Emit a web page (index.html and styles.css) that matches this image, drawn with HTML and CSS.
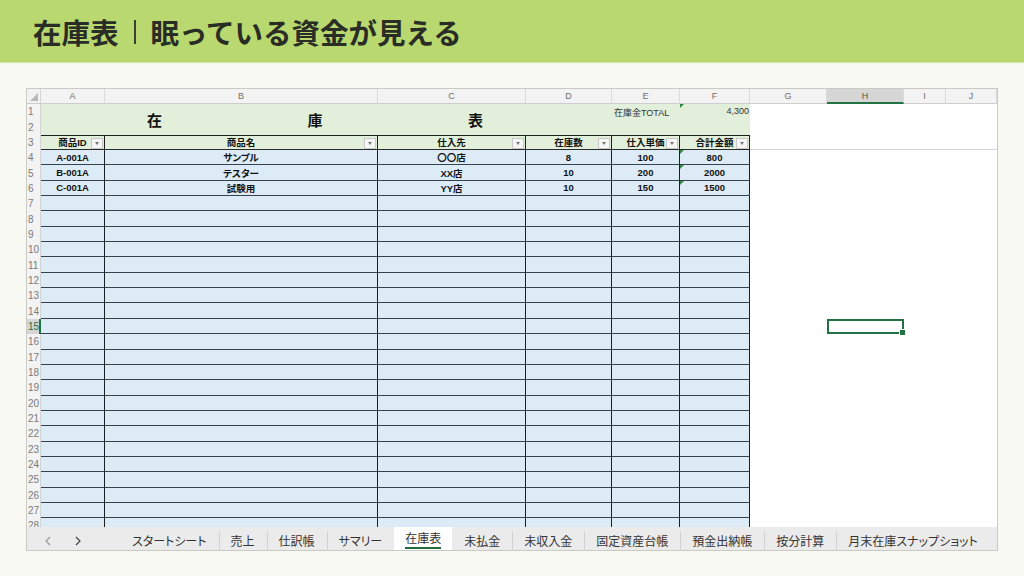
FILE: index.html
```html
<!DOCTYPE html>
<html lang="ja">
<head>
    <meta charset="UTF-8">
    <meta name="viewport" content="width=device-width, initial-scale=1.0">
    <title>在庫表</title>
    <link rel="stylesheet" href="styles.css">
</head>
<body>
    <header class="hero">
        <h1>在庫表<span class="bar"></span>眠っている資金が見える</h1>
    </header>

    <main class="wrap">
        <div class="book">
            <div class="viewport">
                <div class="sheet" id="sheet">
                    <!-- cells are built by the script below -->
                </div>
            </div>
            <div class="tabs">
                <div class="nav">
                    <svg width="6" height="10" viewBox="0 0 6 10"><polyline points="5,1 1,5 5,9" fill="none" stroke="#9a9a9a" stroke-width="1.2"/></svg>
                    <svg width="6" height="10" viewBox="0 0 6 10"><polyline points="1,1 5,5 1,9" fill="none" stroke="#444" stroke-width="1.2"/></svg>
                </div>
                <div class="tab first">スタートシート</div>
                <div class="tab">売上</div>
                <div class="tab">仕訳帳</div>
                <div class="tab">サマリー</div>
                <div class="tab active"><span>在庫表</span></div>
                <div class="tab first">未払金</div>
                <div class="tab">未収入金</div>
                <div class="tab">固定資産台帳</div>
                <div class="tab">預金出納帳</div>
                <div class="tab">按分計算</div>
                <div class="tab">月末在庫スナップショット</div>
            </div>
        </div>
    </main>

    <script>
        const cols = ['A', 'B', 'C', 'D', 'E', 'F', 'G', 'H', 'I', 'J'];
        const heads = ['商品ID', '商品名', '仕入先', '在庫数', '仕入単価', '合計金額'];
        const items = [
            ['A-001A', 'サンプル', '〇〇店', '8', '100', '800'],
            ['B-001A', 'テスター', 'XX店', '10', '200', '2000'],
            ['C-001A', '試験用', 'YY店', '10', '150', '1500']
        ];

        let html = '<div class="corner"></div>';
        cols.forEach(c => {
            html += `<div class="ch${c === 'H' ? ' on' : ''}">${c}</div>`;
        });

        // rows 1-2, merged title band
        html += '<div class="rh">1</div>';
        html += '<div class="band title"><span>在</span><span>庫</span><span>表</span></div>';
        html += '<div class="band label">在庫金TOTAL</div><div class="band total flag">4,300</div>';
        html += '<div class="cell"></div>'.repeat(4);
        html += '<div class="rh">2</div><div class="band"></div><div class="band"></div>';
        html += '<div class="cell"></div>'.repeat(4);

        // row 3, table headers
        html += '<div class="rh">3</div>';
        heads.forEach(h => {
            html += `<div class="th">${h}<span class="dd"></span></div>`;
        });
        html += '<div class="cell line"></div>'.repeat(4);

        for (let r = 4; r <= 28; r++) {
            const item = items[r - 4];
            html += `<div class="rh${r === 15 ? ' on' : ''}">${r}</div>`;
            for (let c = 0; c < 6; c++) {
                let cls = 'td';
                if (c === 5 && item) cls += ' flag';
                if (c === 5 && r === 6) cls += ' end';
                html += `<div class="${cls}">${item ? item[c] : ''}</div>`;
            }
            for (let c = 6; c < 10; c++) {
                html += `<div class="cell${r === 15 && c === 7 ? ' sel' : ''}"></div>`;
            }
        }

        document.getElementById('sheet').innerHTML = html;
    </script>
</body>
</html>
```

FILE: styles.css
```css
* { box-sizing: border-box; }
body { margin: 0; background: #f8f9f3; font-family: "Noto Sans CJK JP", sans-serif; color: #222; }

.hero { height: 63px; background: #b9d970; border-bottom: 1px solid #d3e6ab; display: flex; align-items: center; padding: 2px 0 0 33px; }
.hero h1 { margin: 0; font-size: 28.5px; font-weight: 700; line-height: 1; color: #2a2d25; display: flex; align-items: center; }
.bar { width: 2px; height: 24px; background: #3d4035; margin: 0 15px 0 15px; }

.wrap { padding: 25px 0 0 26px; }
.book { width: 972px; border: 1px solid #c9cac4; background: #fff; }
.viewport { height: 438px; overflow: hidden; }

.sheet { display: grid; grid-template-columns: 14px 64px 273px 148px 86px 68px 70px 77px 77px 42px 51px; grid-template-rows: 15px; grid-auto-rows: 15.35px; font-family: "Liberation Sans", "Noto Sans CJK JP", sans-serif; font-size: 9.5px; font-feature-settings: "palt"; }
.sheet > div { display: flex; align-items: center; justify-content: center; white-space: nowrap; }

.corner { background: #f2f2f2; border-right: 1px solid #d4d4d4; border-bottom: 1px solid #cdcdcd; position: relative; }
.corner::after { content: ""; position: absolute; right: 2px; bottom: 2px; border-left: 8px solid transparent; border-bottom: 8px solid #b8b8b8; }

.ch { background: #f3f3f3; color: #6f6f6f; font-size: 9px; border-right: 1px solid #dadada; border-bottom: 1px solid #cdcdcd; }
.ch.on { background: #d6d6d6; color: #3f5f4a; border-bottom: 2px solid #217346; }

.rh { background: #f3f3f3; color: #7a7a7a; font-size: 10px; border-right: 1px solid #d4d4d4; justify-content: flex-start !important; padding-left: 1px; }
.rh.on { background: #d6d6d6; color: #217346; border-right: 2px solid #217346; }

.band { background: #e2efda; }
.title { grid-column: span 4; grid-row: span 2; justify-content: space-between !important; padding: 0 129px 0 106px; font-family: "Noto Sans CJK JP", sans-serif; font-size: 15px; font-weight: 700; color: #111; }
.label { align-items: flex-start !important; justify-content: flex-start !important; padding: 2px 0 0 2px; font-size: 9px; color: #333; }
.total { align-items: flex-start !important; justify-content: flex-end !important; padding: 2px 1px 0 0; font-size: 9px; color: #333; }

.th { background: #e2efda; font-weight: 700; color: #111; border-top: 1px solid #1e1e1e; border-right: 1px solid #1e1e1e; border-bottom: 1px solid #2a2a2a; position: relative; }
.dd { position: absolute; right: 1px; top: 2px; width: 12px; height: 11px; background: #f6f6f6; border: 1px solid #c8c8c8; }
.dd::after { content: ""; position: absolute; left: 3px; top: 3px; border-left: 2.5px solid transparent; border-right: 2.5px solid transparent; border-top: 3px solid #777; }

.td { background: #ddebf7; font-weight: 700; color: #111; border-right: 1px solid #1e1e1e; border-bottom: 1px solid #36424c; }

.cell { background: #fff; }
.cell.line { border-bottom: 1px solid #d4d4d4; }
.cell.sel { box-shadow: inset 0 0 0 2px #217346; position: relative; }
.cell.sel::after { content: ""; position: absolute; right: -2px; bottom: -2px; width: 5px; height: 5px; background: #217346; border: 1px solid #fff; }

.flag { position: relative; }
.flag::before { content: ""; position: absolute; left: 0; top: 0; border-top: 4px solid #2d8a3e; border-right: 4px solid transparent; }
.end::after { content: ""; position: absolute; right: -1px; bottom: -1px; border-left: 3px solid transparent; border-bottom: 3px solid #2f4d8a; }

.tabs { height: 23px; background: #ebebeb; display: flex; font-size: 12px; color: #333; font-feature-settings: "palt"; overflow: hidden; }
.nav { flex: none; width: 93px; display: flex; align-items: center; gap: 24px; padding: 4px 0 0 18px; }
.tab { flex: none; display: flex; align-items: center; padding: 4px 12px 0; position: relative; white-space: nowrap; }
.tab::before { content: ""; position: absolute; left: 0; top: 4px; bottom: 0; border-left: 1px solid #d2d2d2; }
.tab.first::before, .tab.active::before { display: none; }
.tab.active { background: #fff; padding: 0 11px; }
.tab.active span { border-bottom: 2px solid #1f6b3c; padding: 1px 0 1px; }
```
